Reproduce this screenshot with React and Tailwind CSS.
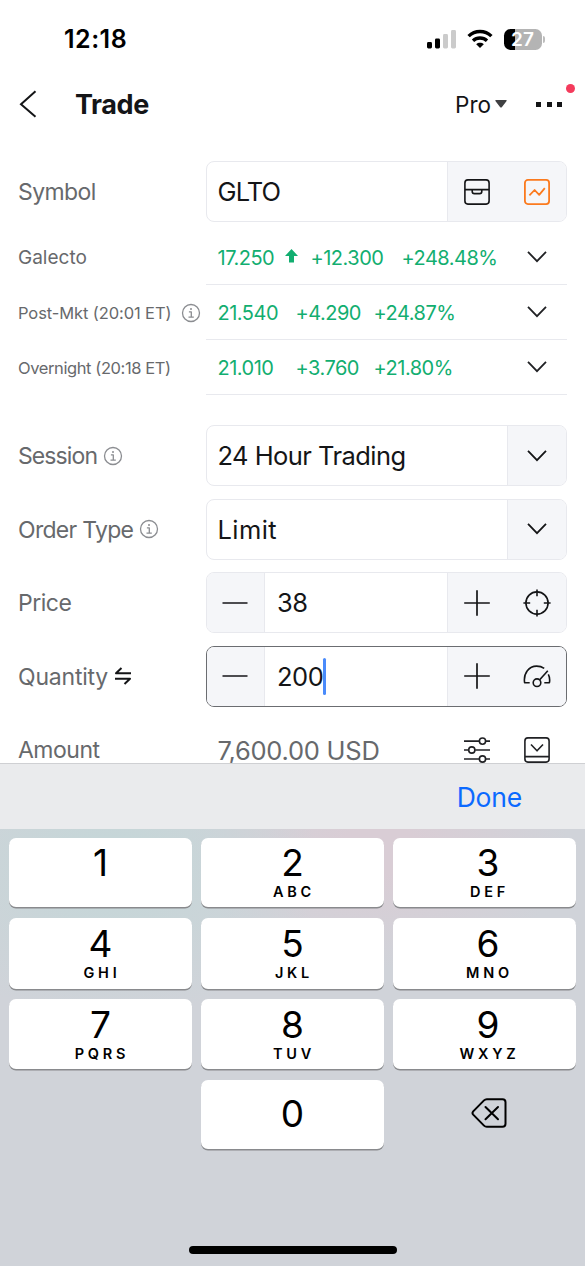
import React from "react";

const quotes = [
  {
    label: "Galecto",
    labelClass: "text-[19px]",
    price: "17.250",
    change: "+12.300",
    percent: "+248.48%",
    up: true,
  },
  {
    label: "Post-Mkt (20:01 ET)",
    labelClass: "text-[16.5px] tracking-[-0.1px]",
    price: "21.540",
    change: "+4.290",
    percent: "+24.87%",
    info: true,
  },
  {
    label: "Overnight (20:18 ET)",
    labelClass: "text-[16.5px] tracking-[-0.4px]",
    price: "21.010",
    change: "+3.760",
    percent: "+21.80%",
  },
];

const keys = [
  ["1", ""],
  ["2", "ABC"],
  ["3", "DEF"],
  ["4", "GHI"],
  ["5", "JKL"],
  ["6", "MNO"],
  ["7", "PQRS"],
  ["8", "TUV"],
  ["9", "WXYZ"],
];

function Icon({ size = 28, className = "", stroke = 1.6, children }) {
  return (
    <svg
      width={size}
      height={size}
      viewBox={`0 0 ${size} ${size}`}
      fill="none"
      stroke="currentColor"
      strokeWidth={stroke}
      strokeLinejoin="round"
      className={`shrink-0 ${className}`}
    >
      {children}
    </svg>
  );
}

const ChevronDown = () => (
  <Icon>
    <path d="M5 8.9 14 18.2 23 8.9" strokeWidth="1.8" strokeLinejoin="miter" />
  </Icon>
);

const InfoIcon = () => (
  <Icon size={20} stroke={1.3} className="text-[#8b8d91]">
    <circle cx="10" cy="10" r="8.5" />
    <path d="M7.9 8.8H10.3V14M7.5 14.2H12.8" />
    <circle cx="10" cy="6" r="1" fill="currentColor" stroke="none" />
  </Icon>
);

const MinusIcon = () => (
  <Icon>
    <path d="M1.5 14H26.5" strokeWidth="1.7" />
  </Icon>
);

const PlusIcon = () => (
  <Icon>
    <path d="M1.2 14H26.8M14 1.2V26.8" strokeWidth="1.7" />
  </Icon>
);

const ArchiveIcon = () => (
  <Icon>
    <rect x="1.9" y="1.9" width="24.2" height="24.2" rx="3" />
    <path d="M2 11.6H26M9.2 12V13.2Q9.2 15.6 11.4 15.6H16.6Q18.8 15.6 18.8 13.2V12" />
  </Icon>
);

const ChartIcon = () => (
  <Icon className="text-[#fb7a1e]">
    <rect x="1.9" y="1.9" width="24.2" height="24.2" rx="3" strokeWidth="1.8" />
    <path d="M6.4 17.4 11.6 12 16.2 16.8 21.8 10.2" strokeWidth="1.8" />
  </Icon>
);

const TargetIcon = () => (
  <Icon>
    <circle cx="14" cy="14" r="11.1" />
    <path d="M14 .4V7.2M14 20.8V27.6M.4 14H7.2M20.8 14H27.6" />
  </Icon>
);

const GaugeIcon = () => (
  <Icon>
    <path d="M6.7 20.7H1.6C.2 10.8 6.2 4.1 13.6 4.1C16.6 4.1 19.1 4.9 21.2 6.4M25.3 12.4C26.6 14.8 27 17.6 26.4 20.7H21.3" />
    <circle cx="14" cy="20.7" r="3.8" />
    <path d="M16.7 17.8 24.8 8.7" />
  </Icon>
);

const SlidersIcon = () => (
  <Icon>
    <path d="M1 5.1H16.2M22.8 5.1H27M1 14H5.5M12.2 14H27M1 23H16.2M22.8 23H27" />
    <circle cx="19.5" cy="5.1" r="3.1" />
    <circle cx="8.8" cy="14" r="3.1" />
    <circle cx="19.5" cy="23" r="3.1" />
  </Icon>
);

const PanelDownIcon = () => (
  <Icon>
    <rect x="1.9" y="1.9" width="24.2" height="24.2" rx="3" />
    <path d="M2 20.6H26M8 8.5 14 14.8 20 8.5" />
  </Icon>
);

function FormRow({ label, labelClass = "", labelExtra, active, children }) {
  return (
    <div className="flex h-[61px] items-center">
      <div className="flex w-[187.5px] shrink-0 items-center gap-[6px] text-[23px] text-[#67696c]">
        <span className={`pt-[2px] whitespace-nowrap ${labelClass}`}>{label}</span>
        {labelExtra}
      </div>
      <div
        className={`flex h-[61px] w-[361.5px] overflow-hidden rounded-[8px] border-[1.5px] text-[25.5px] text-[#141517] ${
          active ? "border-[#6b6d71]" : "border-[#e8e9ee]"
        }`}
      >
        {children}
      </div>
    </div>
  );
}

function SelectField({ value, valueClass }) {
  return (
    <>
      <div className={`flex flex-1 items-center pt-[2px] pl-[11px] ${valueClass}`}>{value}</div>
      <div className="flex w-[59px] items-center justify-center border-l border-[#e8e9ee] bg-[#f5f6f9]">
        <ChevronDown />
      </div>
    </>
  );
}

function StepperField({ value, icon, caret }) {
  return (
    <>
      <div className="flex w-[58.5px] items-center justify-center border-r border-[#e8e9ee] bg-[#f5f6f9]">
        <MinusIcon />
      </div>
      <div className="flex flex-1 items-center pl-[12px] tracking-[-0.5px]">
        <span className="pt-[2px]">{value}</span>
        {caret && <span className="h-[37px] w-[3px] rounded-full bg-[#4a8bfb]" />}
      </div>
      <div className="flex w-[119px] items-center gap-8 border-l border-[#e8e9ee] bg-[#f5f6f9] pl-[15px]">
        <PlusIcon />
        {icon}
      </div>
    </>
  );
}

function StatusBar() {
  return (
    <div className="flex h-[78px] items-center justify-between pr-[40px] pl-[64px]">
      <span className="pt-[2px] text-[25px] font-semibold tracking-[0.5px] text-black">12:18</span>
      <div className="flex items-center">
        <svg width="30" height="20" viewBox="0 0 30 20">
          <rect x="0" y="13" width="5" height="6.5" rx="1.4" />
          <rect x="8" y="9.5" width="5" height="10" rx="1.4" />
          <rect x="16" y="5" width="5" height="14.5" rx="1.4" fill="#cbcbcb" />
          <rect x="24" y="1" width="5" height="18.5" rx="1.4" fill="#cbcbcb" />
        </svg>
        <svg width="26" height="20" viewBox="0 0 26 20" className="ml-[10px]" fill="none" stroke="#000" strokeWidth="3.4">
          <path d="M1.6 7.1C8 .9 18 .9 24.4 7.1" />
          <path d="M6 11.7C9.9 8.1 16.1 8.1 20 11.7" />
          <path d="M9.2 15.2C11.3 13.4 14.7 13.4 16.8 15.2L13 19.1Z" fill="#000" stroke="none" />
        </svg>
        <div className="ml-[11px] flex h-[21px] w-[38px] items-center justify-center rounded-[6.5px] bg-linear-to-r from-black from-28% to-[#b4b4b4] to-28%">
          <span className="text-[19px] leading-none font-semibold text-white">27</span>
        </div>
        <div className="ml-[1px] h-[7px] w-[2.5px] rounded-r-full bg-[#bdbdbd]" />
      </div>
    </div>
  );
}

function Header() {
  return (
    <div className="flex h-[52px] items-center pr-[23px] pl-[14px] text-[#141517]">
      <Icon>
        <path d="M21.5 1.2 7 14.3 21.5 26.8" strokeWidth="2" strokeLinejoin="miter" />
      </Icon>
      <h1 className="ml-[33px] flex-1 text-[27px] leading-none font-bold tracking-[-0.4px]">Trade</h1>
      <span className="pt-px text-[22.5px]">Pro</span>
      <svg width="12" height="8" viewBox="0 0 12 8" className="ml-[4px]" fill="#3f4042">
        <path d="M1 0H11Q12.3 .2 11.4 1.3L7 6.9Q6 8 5 6.9L.6 1.3Q-.3 .2 1 0Z" />
      </svg>
      <div className="relative ml-[29px] flex gap-[5.5px]">
        <span className="h-[5px] w-[5px] bg-[#141517]" />
        <span className="h-[5px] w-[5px] bg-[#141517]" />
        <span className="h-[5px] w-[5px] bg-[#141517]" />
        <span className="absolute -top-[18px] -right-[13px] h-[9px] w-[9px] rounded-full bg-[#f43b5c]" />
      </div>
    </div>
  );
}

function QuoteRow({ quote }) {
  return (
    <div className="flex h-[55px]">
      <div className="flex w-[187.5px] shrink-0 items-center justify-between pr-[5px] text-[#67696c]">
        <span className={`pt-[2px] whitespace-nowrap ${quote.labelClass}`}>{quote.label}</span>
        {quote.info && <InfoIcon />}
      </div>
      <div className="flex flex-1 items-center border-b border-[#e8e9ee] pr-[16px] pl-[12px] text-[20px] tracking-[-0.5px] text-[#12ae70]">
        <div className={`flex items-center ${quote.up ? "w-[93px]" : "w-[78px]"}`}>
          <span className="w-[67px] pt-[2px]">{quote.price}</span>
          {quote.up && (
            <svg width="13" height="14" viewBox="0 0 13 14" className="mb-[2px]" fill="currentColor">
              <path d="M6.5 0 13 7H9V13.5H4V7H0Z" />
            </svg>
          )}
        </div>
        <span className={`pt-[2px] ${quote.up ? "w-[91px]" : "w-[78px]"}`}>{quote.change}</span>
        <span className="flex-1 pt-[2px]">{quote.percent}</span>
        <span className="text-[#202124]">
          <ChevronDown />
        </span>
      </div>
    </div>
  );
}

function Key({ digit, letters }) {
  return (
    <button className="flex h-full flex-col items-center rounded-[7px] bg-white pt-[5px] text-black shadow-[0_1.5px_0_#898a8d] nth-[3n]:pl-[7px] nth-[n+4]:pt-[6px]">
      <span className="text-[37px] leading-[40px]">{digit}</span>
      <span className="pl-[3px] text-[14.5px] leading-[17px] font-semibold tracking-[3.8px]">{letters}</span>
    </button>
  );
}

function Keypad() {
  return (
    <div className="flex flex-1 flex-col items-center bg-[#d0d3d9] bg-[radial-gradient(ellipse_210px_150px_at_110px_40px,#c6d6d8_20%,transparent),radial-gradient(ellipse_190px_120px_at_380px_20px,#d9cdd5_20%,transparent)] px-[9px] pt-[9px]">
      <div className="grid w-full grid-cols-3 grid-rows-[69px_71px_70px_69px] gap-x-[9px] gap-y-[10.7px]">
        {keys.map(([digit, letters]) => (
          <Key key={digit} digit={digit} letters={letters} />
        ))}
        <button className="col-start-2 flex items-center justify-center rounded-[7px] bg-white pb-[2px] text-[37px] text-black shadow-[0_1.5px_0_#898a8d]">
          0
        </button>
        <button className="flex items-center justify-center pb-[4px] pl-[8px] text-black">
          <svg width="36" height="30" viewBox="0 0 36 30" fill="none" stroke="currentColor" strokeWidth="2" strokeLinejoin="round" strokeLinecap="round">
            <path d="M15.8 1.2H31.5Q34.5 1.2 34.5 4.2V25.8Q34.5 28.8 31.5 28.8H15.8Q14.2 28.8 13 27.6L2.2 16.6Q.8 15 2.2 13.4L13 2.4Q14.2 1.2 15.8 1.2Z" />
            <path d="M14.5 9 27 21.2M27 9 14.5 21.2" />
          </svg>
        </button>
      </div>
      <div className="mt-auto mb-[12px] h-[8px] w-[208px] rounded-full bg-black" />
    </div>
  );
}

export default function App() {
  return (
    <div className="flex h-[1266px] w-[585px] flex-col overflow-hidden bg-white font-[Inter,sans-serif]">
      <div className="h-[763px] shrink-0 overflow-hidden">
        <StatusBar />
        <Header />
        <div className="px-[18px] pt-[31px] text-[#202124]">
          <FormRow label="Symbol" labelClass="tracking-[-0.6px]">
            <div className="flex flex-1 items-center pt-[2px] pl-[11px] tracking-[-0.9px]">GLTO</div>
            <div className="flex w-[119px] items-center gap-8 border-l border-[#e8e9ee] bg-[#f5f6f9] pl-[15px]">
              <ArchiveIcon />
              <ChartIcon />
            </div>
          </FormRow>

          <div className="mt-[8px] mb-[30px]">
            {quotes.map((q) => (
              <QuoteRow key={q.label} quote={q} />
            ))}
          </div>

          <div className="flex flex-col gap-[12.5px]">
            <FormRow label="Session" labelClass="tracking-[-0.9px]" labelExtra={<InfoIcon />}>
              <SelectField value="24 Hour Trading" valueClass="tracking-[-0.55px]" />
            </FormRow>
            <FormRow label="Order Type" labelClass="tracking-[-0.7px]" labelExtra={<InfoIcon />}>
              <SelectField value="Limit" valueClass="tracking-[0.4px]" />
            </FormRow>
            <FormRow label="Price" labelClass="tracking-[-0.5px]">
              <StepperField value="38" icon={<TargetIcon />} />
            </FormRow>
            <FormRow
              label="Quantity"
              labelClass="tracking-[-0.2px]"
              active
              labelExtra={
                <Icon size={18} stroke={2} className="text-[#141517]">
                  <path d="M7.5 1 2 6.2H17M1 11.8H16L10.5 17" />
                </Icon>
              }
            >
              <StepperField value="200" icon={<GaugeIcon />} caret />
            </FormRow>
            <div className="flex h-[61px] items-center leading-none text-[#67696c]">
              <span className="w-[199.5px] pt-[2px] text-[23px] tracking-[-0.5px]">Amount</span>
              <span className="flex-1 pt-[2px] text-[25.5px] tracking-[-0.25px]">7,600.00 USD</span>
              <div className="flex gap-8 pr-[16px] text-[#202124]">
                <SlidersIcon />
                <PanelDownIcon />
              </div>
            </div>
          </div>
        </div>
      </div>

      <div className="flex h-[66px] shrink-0 items-center justify-end border-t border-[#cfd0d3] bg-[#eaebed] pr-[63px]">
        <button className="pt-[3px] text-[26.5px] tracking-[-0.2px] text-[#0b69ff]">Done</button>
      </div>
      <Keypad />
    </div>
  );
}
